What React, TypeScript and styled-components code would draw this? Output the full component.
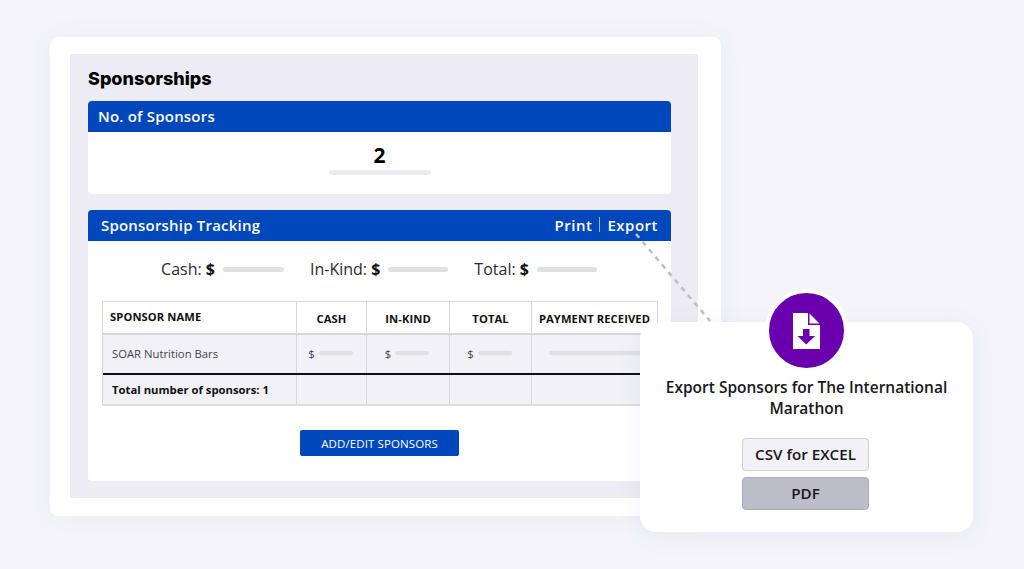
import { FC } from 'react';
import styled, { createGlobalStyle } from 'styled-components';

const GlobalStyle = createGlobalStyle`
  html, body {
    margin: 0;
    height: 100%;
    background: #f4f4fa;
    overflow: hidden;
  }
  body {
    font-family: 'Open Sans', 'Noto Sans', sans-serif;
    color: #101014;
  }
`;

const Page = styled.div`
  position: relative;
  width: 1024px;
  height: 569px;
  padding: 37px 0 0 50px;
  box-sizing: border-box;
`;

const Card = styled.div`
  width: 671px;
  height: 479px;
  box-sizing: border-box;
  padding: 17px 23px 18px 20px;
  background: #fff;
  border-radius: 8px;
  box-shadow: 0 0 24px rgba(90, 90, 150, 0.06);
`;

const Panel = styled.div`
  height: 100%;
  box-sizing: border-box;
  padding: 14px 27px 0 18px;
  background: #edecf4;
`;

const Title = styled.h1`
  margin: 0 0 11px;
  height: 22px;
  font-family: Inter, 'Liberation Sans', sans-serif;
  font-size: 18px;
  line-height: 22px;
  font-weight: 800;
  color: #000;
`;

const Section = styled.section<{ $height: number }>`
  height: ${p => p.$height}px;
  margin-bottom: 16px;
  background: #fff;
  border-radius: 4px;
`;

const SectionHeader = styled.div<{ $inset: number }>`
  display: flex;
  align-items: center;
  justify-content: space-between;
  height: 31px;
  box-sizing: border-box;
  padding: 0 13px 2px ${p => p.$inset}px;
  background: #0047bb;
  border-radius: 4px 4px 0 0;
  color: #fff;
  font-size: 15px;
  font-weight: 600;
  letter-spacing: 0.2px;
`;

const HeaderLinks = styled.div`
  display: flex;
  align-items: center;
  gap: 7px;
  letter-spacing: 0.5px;
`;

const Divider = styled.span`
  width: 1px;
  height: 15px;
  background: #9db8e6;
`;

const CountBody = styled.div`
  display: flex;
  flex-direction: column;
  align-items: center;
  padding-top: 8px;
`;

const Count = styled.div`
  font-size: 21px;
  line-height: 30px;
  font-weight: 700;
  color: #000;
`;

const Placeholder = styled.span<{ $width: number; $height?: number; $color?: string }>`
  display: inline-block;
  flex: none;
  width: ${p => p.$width}px;
  height: ${p => p.$height ?? 5}px;
  border-radius: 3px;
  background: ${p => p.$color ?? '#e0e0e8'};
`;

const Totals = styled.div`
  display: flex;
  justify-content: center;
  gap: 26px;
  height: 60px;
  padding: 15px 1px 0 0;
  box-sizing: border-box;
`;

const TotalItem = styled.div`
  display: flex;
  align-items: center;
  height: 26px;
  gap: 8px;
  font-size: 16px;
  color: #2a2a30;

  b {
    font-weight: 700;
    color: #101014;
  }
`;

const TableWrap = styled.div`
  margin: 0 13px 0 14px;
  border: 1px solid #d6d6de;
  border-bottom-width: 2px;
  border-bottom-color: #dededf;
`;

const Row = styled.div<{ $height: number; $tinted?: boolean; $rule?: string }>`
  display: grid;
  grid-template-columns: 193px 70px 83px 82px 1fr;
  height: ${p => p.$height}px;
  background: ${p => (p.$tinted ? '#f1f1f6' : '#fff')};
  border-bottom: ${p => p.$rule ?? 'none'};
`;

const Cell = styled.div<{ $center?: boolean }>`
  display: flex;
  align-items: center;
  justify-content: ${p => (p.$center ? 'center' : 'flex-start')};
  gap: 4px;
  padding-bottom: 2px;
  border-left: 1px solid #d6d6de;
  font-size: 11.3px;
  color: #44444c;

  &:first-child {
    border-left: none;
    padding-left: 9px;
  }
`;

const HeadCell = styled(Cell)`
  font-size: 11.2px;
  font-weight: 700;
  color: #101014;
  padding: 1px 0 0;
  letter-spacing: 0.1px;

  &:first-child {
    padding: 0 0 2px 7px;
  }
`;

const TotalLabel = styled(Cell)`
  font-size: 11.3px;
  font-weight: 700;
  color: #101014;
  padding-bottom: 1px;
`;

const Amount = styled(Cell)`
  padding-right: 2px;
`;

const ButtonRow = styled.div`
  display: flex;
  justify-content: center;
  margin-top: 24px;
`;

const PrimaryButton = styled.button`
  width: 159px;
  height: 26px;
  padding: 0;
  border: none;
  border-radius: 2px;
  background: #0047bb;
  color: #fff;
  font-family: inherit;
  font-size: 11.5px;
  letter-spacing: 0.1px;
`;

const Connector = styled.svg`
  position: absolute;
  left: 630px;
  top: 230px;
`;

const Popover = styled.div`
  position: absolute;
  left: 640px;
  top: 322px;
  width: 333px;
  height: 210px;
  display: flex;
  flex-direction: column;
  align-items: center;
  padding-top: 55px;
  box-sizing: border-box;
  background: #fff;
  border-radius: 16px;
  box-shadow: 0 4px 24px rgba(90, 90, 150, 0.08);
`;

const Badge = styled.div`
  position: absolute;
  left: 125px;
  top: -33px;
  width: 75px;
  height: 75px;
  display: flex;
  align-items: center;
  justify-content: center;
  background: #6a00ad;
  border: 4px solid #fff;
  border-radius: 50%;
`;

const PopoverTitle = styled.div`
  width: 300px;
  text-align: center;
  font-size: 15.5px;
  line-height: 21px;
  font-weight: 600;
  color: #17171c;
  margin-bottom: 19px;
`;

const ExportButton = styled.div<{ $filled?: boolean }>`
  display: flex;
  align-items: center;
  justify-content: center;
  width: 127px;
  height: 33px;
  margin: 0 2px 6px 0;
  padding-bottom: 1px;
  box-sizing: border-box;
  border: 1.5px solid ${p => (p.$filled ? '#acacba' : '#d0d0da')};
  border-radius: 4px;
  background: ${p => (p.$filled ? '#bdbdc9' : '#f1f1f6')};
  font-size: 15.2px;
  font-weight: 600;
  color: #17171c;
`;

const FileDownloadIcon: FC = () => (
  <svg width="27" height="36" viewBox="0 0 27 36">
    <path d="M0 0H15V12H27V36H0Z M16.5 0.5L26.5 10.5H16.5Z" fill="#fff" />
    <path d="M10 16H16.5V23H22L13.25 31.5L4.5 23H10Z" fill="#6a00ad" />
  </svg>
);

const AmountCell: FC = () => (
  <Amount $center>
    $ <Placeholder $width={34} $height={4} />
  </Amount>
);

const App: FC = () => (
  <Page>
    <GlobalStyle />
    <Card>
      <Panel>
        <Title>Sponsorships</Title>
        <Section $height={93}>
          <SectionHeader $inset={10}>No. of Sponsors</SectionHeader>
          <CountBody>
            <Count>2</Count>
            <Placeholder $width={102} $color="#ebebf1" />
          </CountBody>
        </Section>
        <Section $height={271}>
          <SectionHeader $inset={13}>
            Sponsorship Tracking
            <HeaderLinks>
              Print <Divider /> Export
            </HeaderLinks>
          </SectionHeader>
          <Totals>
            <TotalItem>
              <span>
                Cash: <b>$</b>
              </span>
              <Placeholder $width={61} />
            </TotalItem>
            <TotalItem>
              <span>
                In-Kind: <b>$</b>
              </span>
              <Placeholder $width={60} />
            </TotalItem>
            <TotalItem>
              <span>
                Total: <b>$</b>
              </span>
              <Placeholder $width={60} />
            </TotalItem>
          </Totals>
          <TableWrap>
            <Row $height={31} $rule="2px solid #d6d6de">
              <HeadCell>SPONSOR NAME</HeadCell>
              <HeadCell $center>CASH</HeadCell>
              <HeadCell $center>IN-KIND</HeadCell>
              <HeadCell $center>TOTAL</HeadCell>
              <HeadCell $center>PAYMENT RECEIVED</HeadCell>
            </Row>
            <Row $height={38} $tinted $rule="2px solid #101014">
              <Cell>SOAR Nutrition Bars</Cell>
              <AmountCell />
              <AmountCell />
              <AmountCell />
              <Cell $center>
                <Placeholder $width={92} $height={4} />
              </Cell>
            </Row>
            <Row $height={29} $tinted>
              <TotalLabel>Total number of sponsors: 1</TotalLabel>
              <Cell />
              <Cell />
              <Cell />
              <Cell />
            </Row>
          </TableWrap>
          <ButtonRow>
            <PrimaryButton>ADD/EDIT SPONSORS</PrimaryButton>
          </ButtonRow>
        </Section>
      </Panel>
    </Card>
    <Connector width="90" height="95" viewBox="0 0 90 95">
      <path d="M6 4L80 91" stroke="#bdbdca" strokeWidth="2.5" strokeDasharray="5 5" fill="none" />
    </Connector>
    <Popover>
      <Badge>
        <FileDownloadIcon />
      </Badge>
      <PopoverTitle>Export Sponsors for The International Marathon</PopoverTitle>
      <ExportButton>CSV for EXCEL</ExportButton>
      <ExportButton $filled>PDF</ExportButton>
    </Popover>
  </Page>
);

export default App;
